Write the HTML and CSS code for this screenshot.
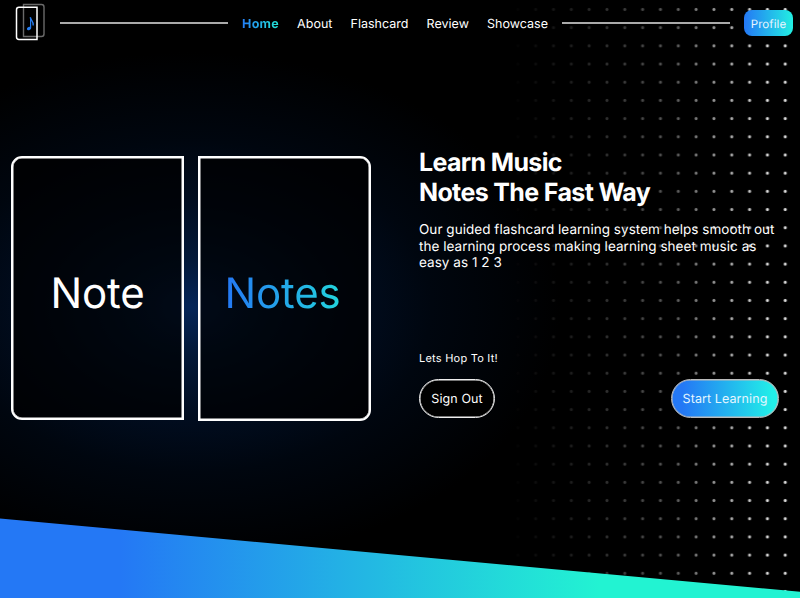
FILE: index.html
```html
<!DOCTYPE html>
<html lang="en">
<head>
<meta charset="utf-8">
<title>Note Notes</title>
<link rel="stylesheet" href="styles.css">
</head>
<body>
<div class="page">
  <div class="glow"></div>
  <div class="dots"></div>
  <svg class="wave" viewBox="0 0 800 80" preserveAspectRatio="none">
    <defs><linearGradient id="w" gradientUnits="userSpaceOnUse" x1="120" y1="0" x2="600" y2="0"><stop offset="0" stop-color="#2478f5"/><stop offset="1" stop-color="#22f3d2"/></linearGradient></defs>
    <path d="M0 .5L800 73.8V80H0Z" fill="url(#w)"/>
  </svg>
  <header class="nav">
    <svg class="logo" viewBox="0 0 32 38" fill="none">
      <path d="M8.5 1.5H26.5Q29 1.5 29 4V31Q29 33.5 26.5 33.5H8.5Z" stroke="#6a6a6a" stroke-width="1.4"/>
      <path d="M22 4.2H4Q1.5 4.2 1.5 6.7V34Q1.5 36.4 4 36.4H22Z" stroke="#fff" stroke-width="1.5"/>
      <path d="M15.6 14.5V25.2" stroke="#247cf0" stroke-width="1.2"/>
      <path d="M15.2 14.4C15.8 17.5 18.8 18.2 18.2 22.5" stroke="#247cf0" stroke-width="1.4"/>
      <ellipse cx="14" cy="25.5" rx="2.2" ry="1.5" transform="rotate(-20 14 25.5)" fill="#247cf0"/>
    </svg>
    <span class="line"></span>
    <nav class="links">
      <a class="active">Home</a><a>About</a><a>Flashcard</a><a>Review</a><a>Showcase</a>
    </nav>
    <span class="line"></span>
    <a class="profile">Profile</a>
  </header>
  <main class="hero">
    <section class="cards">
      <div class="card left"><span>Note</span></div>
      <div class="card right"><span class="tint">Notes</span></div>
    </section>
    <section class="copy">
      <h1>Learn Music<br>Notes The Fast Way</h1>
      <p class="lead">Our guided flashcard learning system helps smooth out<br>the learning process making learning sheet music as<br>easy as 1 2 3</p>
      <p class="hop">Lets Hop To It!</p>
      <div class="actions">
        <a class="btn">Sign Out</a>
        <a class="btn start">Start Learning</a>
      </div>
    </section>
  </main>
</div>
</body>
</html>
```
FILE: styles.css
```css
* { box-sizing: border-box; }
body { margin: 0; background: #000; color: #fff; font-family: Inter, "Liberation Sans", sans-serif; text-rendering: geometricPrecision; }
.page { position: relative; width: 800px; height: 598px; overflow: hidden; isolation: isolate; }
.glow {
  position: absolute; inset: 0; z-index: -3;
  background: radial-gradient(ellipse 370px 255px at 191px 307px, #052558 0%, #031939 18%, #010d20 42%, #00060f 65%, #000 100%);
}
.dots {
  position: absolute; z-index: -2; left: 509px; top: 0; width: 291px; height: 598px;
  background: radial-gradient(circle at center, #ddd 1px, transparent 2px) -.1px .4px / 17.83px 18.2px;
  -webkit-mask-image: linear-gradient(90deg, transparent, rgba(0,0,0,.2) 32%, rgba(0,0,0,.42) 58%, #000 88%);
  mask-image: linear-gradient(90deg, transparent, rgba(0,0,0,.2) 32%, rgba(0,0,0,.42) 58%, #000 88%);
}
.wave { position: absolute; z-index: -1; left: 0; bottom: 0; width: 800px; height: 80px; }
.nav { display: flex; align-items: center; height: 46px; padding: 0 7px 0 15px; }
.logo { width: 32px; height: 38px; margin: -3px 13px 0 0; flex: none; }
.line { flex: none; width: 168px; height: 1.5px; background: #aaa; }
.links { display: flex; flex: 1; justify-content: space-between; margin: 2px 14px 0 14px; font-size: 12.5px; letter-spacing: .02px; white-space: nowrap; }
.active { letter-spacing: .3px; font-weight: 700; background: linear-gradient(90deg, #247cf5, #22e8d8); -webkit-background-clip: text; background-clip: text; color: transparent; }
.profile {
  display: flex; align-items: center; justify-content: center; flex: none;
  width: 49px; height: 26px; padding-top: 1px; margin-left: 14px; border-radius: 8px;
  background: linear-gradient(90deg, #2478f5, #22efe2); font-size: 11.5px; letter-spacing: .1px; color: #e9f6ff;
}
.hero { display: grid; grid-template-columns: 360px 360px; column-gap: 48px; padding: 101px 0 0 11px; }
.cards { display: flex; justify-content: space-between; padding-top: 9px; }
.card {
  display: flex; align-items: center; justify-content: center; width: 173px; height: 265px;
  padding-top: 11px; border: 2px solid #fff; box-shadow: inset 0 0 0 .5px #fff; font-size: 42px; font-weight: 400; letter-spacing: -.2px;
  background: rgba(0,0,0,.72);
}
.left { height: 264px; border-radius: 11px 0 0 11px; }
.right { padding: 10px 4px 0 0; border-radius: 0 11px 11px 0; }
.tint { background: linear-gradient(90deg, #2478f5, #22d4dd); -webkit-background-clip: text; background-clip: text; color: transparent; }
h1 { margin: 1px 0 0; font-size: 25px; line-height: 30px; font-weight: 700; letter-spacing: -.64px; white-space: nowrap; }
.lead { margin: 14px 0 0; font-size: 13.5px; line-height: 16.7px; letter-spacing: .04px; white-space: nowrap; }
.hop { margin: 78px 0 0; font-size: 11px; line-height: 16px; letter-spacing: .23px; }
.actions { display: flex; justify-content: space-between; margin-top: 13px; }
.btn {
  display: flex; align-items: center; justify-content: center; width: 76px; height: 39px;
  padding-top: 2px; border: 1px solid #eee; box-shadow: inset 0 0 0 .5px #eee; border-radius: 20px; background: #000; font-size: 12.5px; letter-spacing: .1px; white-space: nowrap;
}
.start { width: 108px; border-color: #bbb; box-shadow: inset 0 0 0 .5px #bbb; background: linear-gradient(90deg, #2478f5 10%, #22efe8 95%); color: #e4f6ff; }
```
